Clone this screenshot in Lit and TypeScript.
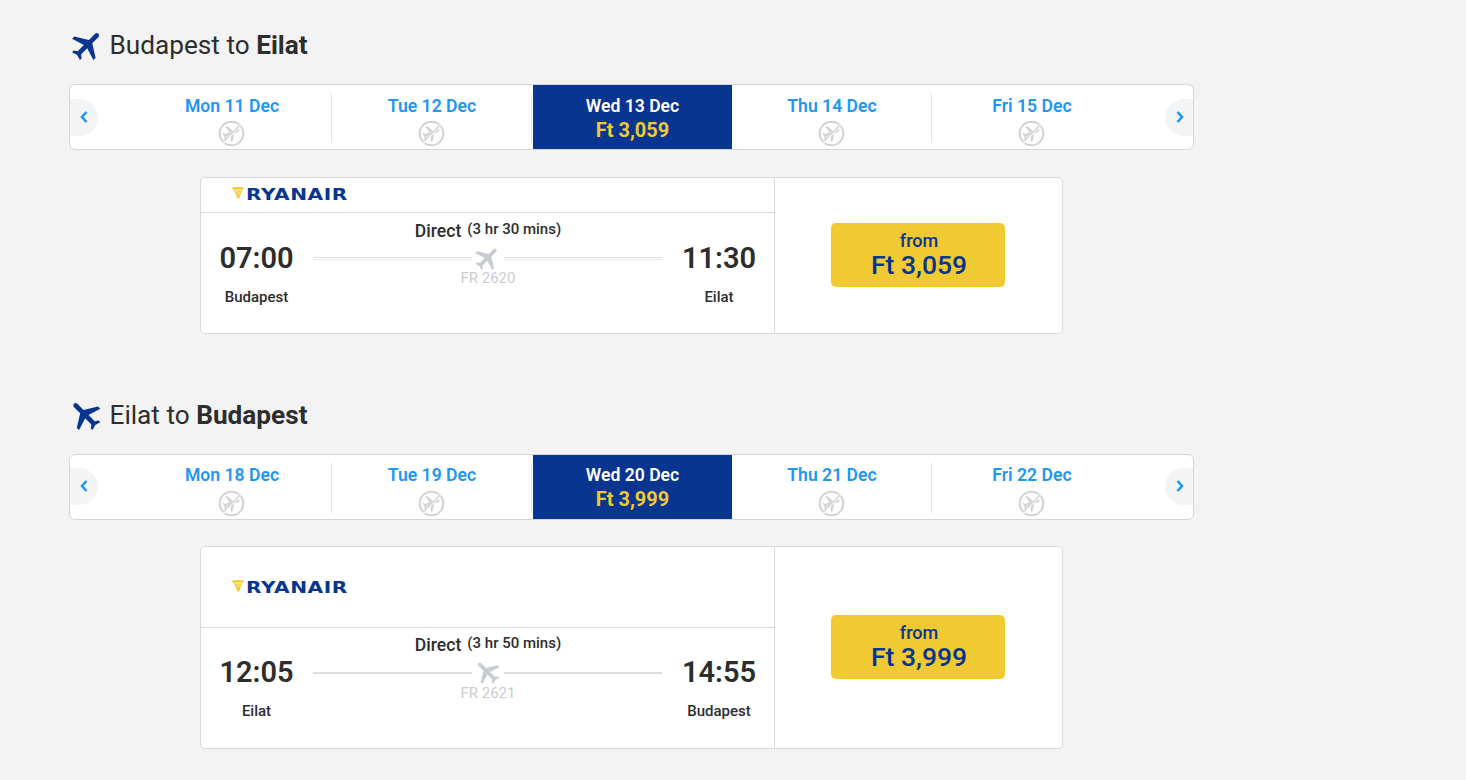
import { LitElement, html, css, svg } from "lit";
import { customElement } from "lit/decorators.js";

const PLANE = "M21 16v-2l-8-5V3.5c0-.83-.67-1.5-1.5-1.5S10 2.67 10 3.5V9l-8 5v2l8-2.5V19l-2 1.5V22l3.5-1 3.5 1v-1.5L13 19v-5.5l8 2.5z";

const plane = (size: number, rot: number, color: string) => html`<svg width=${size} height=${size} viewBox="0 0 24 24" aria-hidden="true">${svg`<path d=${PLANE} fill=${color} transform="rotate(${rot} 11.5 12)"></path>`}</svg>`;

const noFlight = html`<svg width="27" height="27" viewBox="0 0 27 27" aria-hidden="true">
  ${svg`<circle cx="13.5" cy="13.5" r="11.8" fill="none" stroke="#d0d2d5" stroke-width="2"></circle>
  <g transform="translate(3.3 3.3) scale(.85)"><path d=${PLANE} fill="#d0d2d5" transform="rotate(70 12 12)"></path></g>
  <line x1="5.5" y1="22.5" x2="22" y2="5" stroke="#fff" stroke-width="2.6"></line>
  <line x1="5.2" y1="21.8" x2="21.8" y2="5.2" stroke="#d0d2d5" stroke-width="1.5"></line>`}
</svg>`;

const logo = html`<span class="logo">
  <svg width="14" height="14" viewBox="0 0 14 14" aria-hidden="true">${svg`
    <path d="M0.6 1.8 C4.5 .6 9.5 .6 13.4 1.8 L11.6 3.8 L8 12.6 L6.6 12.4 L3 4.6 Z" fill="#f1c933"></path>
    <path d="M3.6 3.6 C6 3 9 3 11 3.4 L7.4 10.6 Z" fill="#fbf0c0"></path>
    <path d="M5.2 3.4 L7.4 10.6 M7.2 3.2 L7.4 10.6 M9.2 3.2 L7.4 10.6 M4.4 5.4 L9.8 5.4 M5.4 7.4 L8.8 7.4" stroke="#f1c933" stroke-width=".6"></path>`}
  </svg>
  <span class="wordmark">RYANAIR</span>
</span>`;

interface Day { label: string; price?: string; }
interface Leg {
  from: string; to: string; rot: number; rotCard: number; days: Day[];
  depart: string; arrive: string; duration: string; flight: string; price: string; tall: boolean;
}

const LEGS: Leg[] = [
  {
    from: "Budapest", to: "Eilat", rot: 45, rotCard: 45,
    days: [{ label: "Mon 11 Dec" }, { label: "Tue 12 Dec" }, { label: "Wed 13 Dec", price: "Ft 3,059" }, { label: "Thu 14 Dec" }, { label: "Fri 15 Dec" }],
    depart: "07:00", arrive: "11:30", duration: "(3 hr 30 mins)", flight: "FR 2620", price: "Ft 3,059", tall: false,
  },
  {
    from: "Eilat", to: "Budapest", rot: -45, rotCard: -45,
    days: [{ label: "Mon 18 Dec" }, { label: "Tue 19 Dec" }, { label: "Wed 20 Dec", price: "Ft 3,999" }, { label: "Thu 21 Dec" }, { label: "Fri 22 Dec" }],
    depart: "12:05", arrive: "14:55", duration: "(3 hr 50 mins)", flight: "FR 2621", price: "Ft 3,999", tall: true,
  },
];

@customElement("app-root")
export class AppRoot extends LitElement {
  static styles = css`
    :host {
      display: block;
      min-height: 780px;
      background: #f3f3f3;
      font-family: Roboto, "Liberation Sans", sans-serif;
      color: #2d2d2d;
      box-sizing: border-box;
      padding: 27px 0 0 69px;
    }
    * { box-sizing: border-box; }
    .section { width: 1125px; }
    .section + .section { margin-top: 63px; }
    .heading {
      display: flex; align-items: center; gap: 2.5px;
      height: 36px; margin: 0 0 21px 0;
      font-size: 26.2px; font-weight: 400; line-height: 36px;
    }
    .heading svg { flex: none; }
    .tall-leg .heading svg { margin-left: -2px; margin-right: 2px; }
    .heading b { font-weight: 700; }
    .strip {
      display: flex; justify-content: space-between; align-items: center;
      height: 66px; background: #fff;
      border: 1px solid #d3d5d8; border-radius: 6px;
    }
    .nav {
      flex: none; width: 28px; height: 37px;
      display: flex; align-items: center; justify-content: center;
      background: #f3f4f6; padding: 0; border: 0;
    }
    .tall-leg .nav { margin-top: -2px; }
    .nav.prev { border-radius: 0 19px 19px 0; }
    .nav.next { border-radius: 19px 0 0 19px; padding-left: 2px; }
    .cells { display: flex; width: 1001px; margin-left: 2px; align-self: stretch; }
    .cell {
      position: relative; width: 200px;
      display: flex; flex-direction: column; align-items: center;
      padding-top: 10px;
      color: #2196f3; font-size: 17.6px; font-weight: 600; line-height: 22px;
    }
    .tall-leg .cell { padding-top: 9px; }
    .cell.sep::after {
      content: ""; position: absolute; right: 0; top: 8px; bottom: 6px;
      width: 1px; background: #e3e4e6;
    }
    .cell.sel { background: #07358f; color: #fff; width: 199px; margin-left: 1px; }
    .cell .ic { height: 27px; margin: 3px 2px 0 0; display: block; }
    .tall-leg .cell .ic { margin-top: 4px; }
    .price { color: #f1c933; font-size: 20px; font-weight: 700; line-height: 24px; margin-top: 1px; }
    .card {
      display: flex; width: 863px; margin: 27px 0 0 131px;
      background: #fff; border: 1px solid #d7d9dc; border-radius: 5px;
    }
    .section + .section .card { margin-top: 26px; }
    .left { width: 574px; border-right: 1px solid #d7d9dc; }
    .head {
      height: 35px; border-bottom: 1px solid #d7d9dc;
      display: flex; align-items: center; padding: 0 0 1px 30px;
    }
    .head.tall { height: 81px; padding: 1px 0 0 30px; }
    .logo { display: flex; align-items: center; gap: 1px; height: 16px; }
    .logo svg { margin-top: -3px; }
    .wordmark {
      display: inline-block; width: 100px; white-space: nowrap;
      font-family: "DejaVu Sans", sans-serif; font-weight: 700; font-size: 16px; line-height: 16px;
      color: #07358f; letter-spacing: 0.4px; transform: scaleX(1.26); transform-origin: 0 50%;
    }
    .body {
      display: grid; grid-template-columns: 111px 352px 110px;
      height: 120px;
    }
    .tall-leg .end { padding-top: 27px; }
    .end { display: flex; flex-direction: column; align-items: center; padding-top: 28px; }
    .time { font-size: 29px; font-weight: 600; line-height: 34px; }
    .city { font-size: 15px; font-weight: 500; line-height: 18px; margin-top: 13px; }
    .mid { display: flex; flex-direction: column; align-items: center; padding-top: 6px; }
    .tall-leg .mid { padding-top: 5px; }
    .stops { display: flex; align-items: flex-start; gap: 6px; height: 24px; }
    .stops .d { font-size: 17.6px; font-weight: 500; line-height: 24px; }
    .stops .t { font-size: 15px; font-weight: 500; line-height: 20px; }
    .route {
      width: 100%; height: 26px; margin-top: 2px; padding: 0 2px 0 1px;
      display: flex; align-items: center;
    }
    .tall-leg .route { margin-top: 3px; }
    .route i { flex: 1; display: block; height: 3px; border-top: 1px solid #e0e2e4; border-bottom: 1px solid #e9eaec; }
    .tall-leg .route i { height: 2px; border: 0; background: #dcdee1; }
    .route svg { flex: none; margin: 0 1px; }
    .tall-leg .route svg { margin: -3px 1px 0 1px; }
    .flight { font-size: 15px; line-height: 16px; color: #c9ccd2; margin-top: -1px; }
    .right { flex: 1; display: flex; align-items: center; justify-content: center; }
    .buy {
      width: 174px; height: 64px; border: 0; border-radius: 5px; background: #f1c930;
      color: #07358f; font-family: inherit; margin: 0 1px 1px 0; padding: 0 0 0 2px;
      display: flex; flex-direction: column; align-items: center; justify-content: center;
    }
    .buy .f { font-size: 18px; font-weight: 500; line-height: 20px; margin-top: 1px; }
    .buy .a { font-size: 26.5px; font-weight: 500; line-height: 30px; margin-top: -1px; }
  `;

  private renderLeg(l: Leg) {
    return html`<section class="section ${l.tall ? "tall-leg" : ""}">
      <h2 class="heading">${plane(38, l.rot, "#07358f")}<span>${l.from} to <b>${l.to}</b></span></h2>
      <div class="strip">
        <button class="nav prev" aria-label="Previous">
          <svg width="10" height="14" viewBox="0 0 10 14">${svg`<path d="M7.5 2 L3 7 L7.5 12" fill="none" stroke="#2196f3" stroke-width="2.6"></path>`}</svg>
        </button>
        <div class="cells">
          ${l.days.map((d, i) => html`<div class="cell ${d.price ? "sel" : ""} ${i === 0 || i === 1 || i === 3 ? "sep" : ""}">
            <span>${d.label}</span>
            ${d.price ? html`<span class="price">${d.price}</span>` : html`<span class="ic">${noFlight}</span>`}
          </div>`)}
        </div>
        <button class="nav next" aria-label="Next">
          <svg width="10" height="14" viewBox="0 0 10 14">${svg`<path d="M2.5 2 L7 7 L2.5 12" fill="none" stroke="#2196f3" stroke-width="2.6"></path>`}</svg>
        </button>
      </div>
      <div class="card">
        <div class="left">
          <div class="head ${l.tall ? "tall" : ""}">${logo}</div>
          <div class="body">
            <div class="end"><span class="time">${l.depart}</span><span class="city">${l.from}</span></div>
            <div class="mid">
              <div class="stops"><span class="d">Direct</span><span class="t">${l.duration}</span></div>
              <div class="route"><i></i>${plane(30, l.rotCard, "#c9ccd2")}<i></i></div>
              <div class="flight">${l.flight}</div>
            </div>
            <div class="end"><span class="time">${l.arrive}</span><span class="city">${l.to}</span></div>
          </div>
        </div>
        <div class="right">
          <button class="buy"><span class="f">from</span><span class="a">${l.price}</span></button>
        </div>
      </div>
    </section>`;
  }

  render() {
    return html`${LEGS.map((l) => this.renderLeg(l))}`;
  }
}
